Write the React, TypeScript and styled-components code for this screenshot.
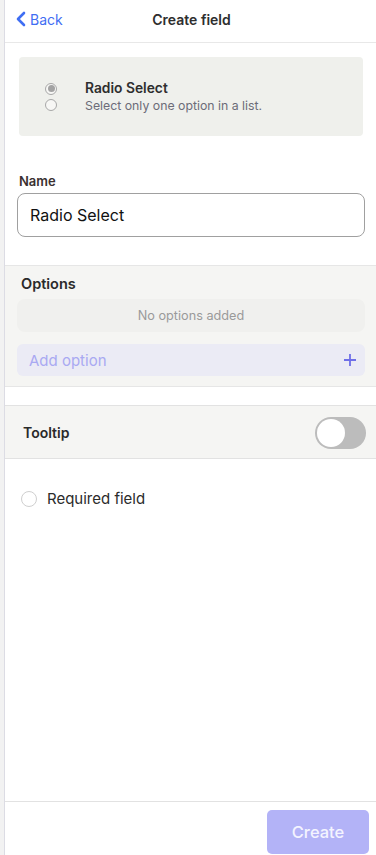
import React from "react";
import styled, { createGlobalStyle } from "styled-components";

const Global = createGlobalStyle`
  html, body { margin: 0; padding: 0; background: #fff; }
  body { font-family: Inter, "Noto Sans", sans-serif; color: #2b2b2b; }
  * { box-sizing: border-box; }
`;

const Shell = styled.div`
  display: flex;
  width: 376px;
  height: 855px;
  overflow: hidden;
`;

const Rail = styled.div`
  width: 5px;
  flex: none;
  background: #f2f2f2;
  border-right: 1px solid #dcdce4;
`;

const Main = styled.div`
  flex: 1;
  display: flex;
  flex-direction: column;
  min-width: 0;
`;

const Header = styled.header`
  height: 43px;
  flex: none;
  display: grid;
  grid-template-columns: 1fr auto 1fr;
  align-items: center;
  border-bottom: 1px solid #e8e8e8;
  padding: 0 0 4px 10px;
`;

const BackLink = styled.a`
  display: flex;
  align-items: center;
  gap: 3px;
  color: #3f6ef3;
  font-size: 14px;
  cursor: pointer;
`;

const Title = styled.h1`
  margin: 0;
  font-size: 14px;
  font-weight: 600;
  color: #2e2e2e;
  transform: translateX(-4px);
`;

const TypeCard = styled.div`
  margin: 14px 13px 0 14px;
  height: 79px;
  background: #eff0ec;
  border-radius: 4px;
  display: flex;
  align-items: center;
  padding-left: 26px;
  gap: 28px;
`;

const RadioStack = styled.div`
  display: flex;
  flex-direction: column;
  gap: 4px;
`;

const MiniRadio = styled.span<{ $on?: boolean }>`
  width: 12px;
  height: 12px;
  border-radius: 50%;
  border: 1px solid #a8a8a8;
  background: #f7f7f5;
  display: flex;
  align-items: center;
  justify-content: center;
  &::after {
    content: "";
    width: 7px;
    height: 7px;
    border-radius: 50%;
    background: ${(p) => (p.$on ? "#a3a3a3" : "transparent")};
  }
`;

const CardText = styled.div`
  display: flex;
  flex-direction: column;
  gap: 2px;
`;

const CardTitle = styled.div`
  font-size: 13.8px;
  font-weight: 600;
  color: #2e2e2e;
`;

const CardSub = styled.div`
  font-size: 12.3px;
  color: #6c6c78;
`;

const NameBlock = styled.div`
  padding: 37px 11px 28px 12px;
  display: flex;
  flex-direction: column;
  gap: 4px;
`;

const Label = styled.label`
  font-size: 13px;
  font-weight: 600;
  color: #3a3030;
  padding-left: 2px;
`;

const TextInput = styled.input`
  height: 44px;
  border: 1px solid #a0a0a0;
  border-radius: 8px;
  padding: 0 12px;
  font-family: Inter, "Noto Sans", sans-serif;
  font-size: 16px;
  color: #111;
  outline: none;
`;

const OptionsSection = styled.section`
  background: #f5f5f3;
  border-top: 1px solid #e6e6e6;
  border-bottom: 1px solid #e6e6e6;
  padding: 9px 11px 10px 12px;
  display: flex;
  flex-direction: column;
`;

const SectionTitle = styled.div`
  font-size: 14.5px;
  font-weight: 600;
  color: #2a2a2a;
  padding-left: 4px;
  margin-bottom: 7px;
`;

const EmptyBox = styled.div`
  height: 33px;
  border-radius: 8px;
  background: #f0f0ee;
  color: #9a9a9a;
  font-size: 12.7px;
  display: flex;
  align-items: center;
  justify-content: center;
  margin-bottom: 12px;
`;

const AddButton = styled.button`
  height: 32px;
  border: none;
  border-radius: 6px;
  background: #ebebf5;
  display: flex;
  align-items: center;
  justify-content: space-between;
  padding: 0 8px 0 12px;
  font-family: Inter, "Noto Sans", sans-serif;
  font-size: 15px;
  color: #a9a9f2;
  cursor: pointer;
`;

const Spacer = styled.div<{ $h: number }>`
  height: ${(p) => p.$h}px;
  flex: none;
`;

const ToggleRow = styled.div`
  height: 54px;
  background: #f5f5f3;
  border-top: 1px solid #e2e2e2;
  border-bottom: 1px solid #e2e2e2;
  display: flex;
  align-items: center;
  justify-content: space-between;
  padding: 1px 10px 0 18px;
`;

const ToggleLabel = styled.span`
  font-size: 14px;
  font-weight: 600;
  color: #2a2a2a;
`;

const Switch = styled.span`
  width: 51px;
  height: 32px;
  border-radius: 16px;
  background: #bcbcbc;
  display: flex;
  align-items: center;
  padding: 2px;
  &::before {
    content: "";
    width: 28px;
    height: 28px;
    border-radius: 50%;
    background: #fff;
  }
`;

const CheckRow = styled.label`
  display: flex;
  align-items: center;
  gap: 10px;
  padding: 30px 0 0 16px;
  font-size: 15px;
  color: #2b2b2b;
`;

const Circle = styled.span`
  width: 16px;
  height: 16px;
  border-radius: 50%;
  border: 1px solid #cfcfcf;
  background: #fff;
`;

const Fill = styled.div`
  flex: 1;
`;

const Footer = styled.footer`
  height: 54px;
  flex: none;
  border-top: 1px solid #e2e2e2;
  display: flex;
  align-items: flex-start;
  justify-content: flex-end;
  padding: 8px 7px 0 0;
`;

const CreateButton = styled.button`
  width: 102px;
  height: 44px;
  border: none;
  border-radius: 5px;
  background: #b3b3f7;
  color: #f4f4ff;
  font-family: Inter, "Noto Sans", sans-serif;
  font-size: 16.5px;
  font-weight: 500;
`;

export default function App() {
  return (
    <>
      <Global />
      <Shell>
        <Rail />
        <Main>
          <Header>
            <BackLink>
              <svg width="12" height="16" viewBox="0 0 12 16">
                <path d="M9 2 L3 8 L9 14" fill="none" stroke="#3f6ef3" strokeWidth="2.6" strokeLinecap="round" strokeLinejoin="round" />
              </svg>
              Back
            </BackLink>
            <Title>Create field</Title>
            <span />
          </Header>
          <TypeCard>
            <RadioStack>
              <MiniRadio $on />
              <MiniRadio />
            </RadioStack>
            <CardText>
              <CardTitle>Radio Select</CardTitle>
              <CardSub>Select only one option in a list.</CardSub>
            </CardText>
          </TypeCard>
          <NameBlock>
            <Label>Name</Label>
            <TextInput defaultValue="Radio Select" />
          </NameBlock>
          <OptionsSection>
            <SectionTitle>Options</SectionTitle>
            <EmptyBox>No options added</EmptyBox>
            <AddButton>
              Add option
              <svg width="14" height="14" viewBox="0 0 14 14">
                <path d="M7 1 V13 M1 7 H13" stroke="#6f6fe8" strokeWidth="1.8" />
              </svg>
            </AddButton>
          </OptionsSection>
          <Spacer $h={18} />
          <ToggleRow>
            <ToggleLabel>Tooltip</ToggleLabel>
            <Switch />
          </ToggleRow>
          <CheckRow>
            <Circle />
            Required field
          </CheckRow>
          <Fill />
          <Footer>
            <CreateButton>Create</CreateButton>
          </Footer>
        </Main>
      </Shell>
    </>
  );
}
